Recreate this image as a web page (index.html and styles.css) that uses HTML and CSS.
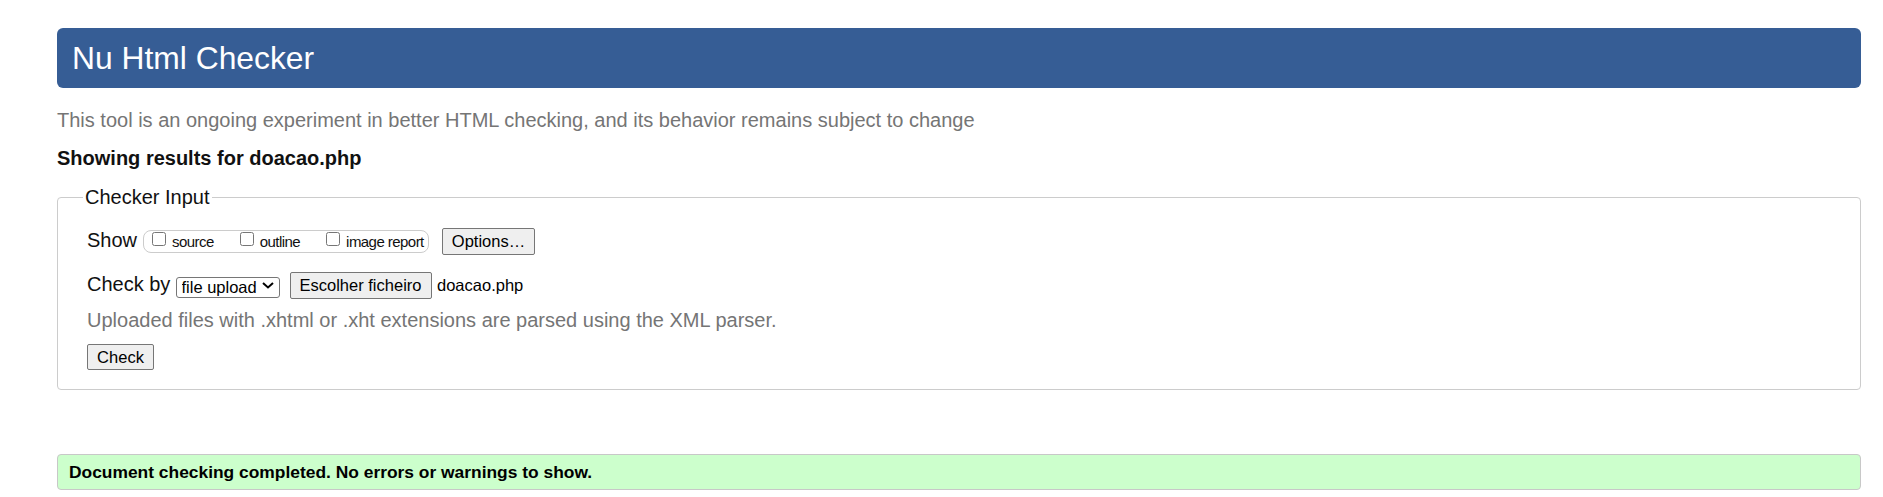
FILE: index.html
```html
<!DOCTYPE html>
<html lang="en">
<head>
<meta charset="utf-8">
<title>Nu Html Checker</title>
<link rel="stylesheet" href="styles.css">
</head>
<body>
<h1 class="title">Nu Html Checker</h1>
<p class="desc">This tool is an ongoing experiment in better HTML checking, and its behavior remains subject to change</p>
<p class="showing">Showing results for doacao.php</p>
<fieldset class="input">
  <legend class="legend">Checker Input</legend>
  <div class="row row-show">
    <span class="row-label label-show">Show</span>
    <div class="show-opts">
      <label class="opt"><input type="checkbox" class="cb">source</label>
      <label class="opt"><input type="checkbox" class="cb">outline</label>
      <label class="opt last"><input type="checkbox" class="cb">image report</label>
    </div>
    <button class="btn btn-options" type="button">Options…</button>
  </div>
  <div class="row row-check">
    <span class="row-label label-check">Check by</span>
    <span class="select-wrap">
      <select class="select"><option>file upload</option></select>
      <svg class="chev" width="12" height="7" viewBox="0 0 12 7"><path d="M1 1 L6 5.5 L11 1" fill="none" stroke="#000" stroke-width="2"/></svg>
    </span>
    <button class="btn btn-file" type="button">Escolher ficheiro</button>
    <span class="filename">doacao.php</span>
  </div>
  <p class="hint">Uploaded files with .xhtml or .xht extensions are parsed using the XML parser.</p>
  <div class="row row-submit">
    <button class="btn btn-check" type="button">Check</button>
  </div>
</fieldset>
<div class="result">Document checking completed. No errors or warnings to show.</div>
</body>
</html>
```
FILE: styles.css
```css
html, body {
  margin: 0;
  background: #fff;
}
body {
  padding: 28px 22px 0 57px;
  font-family: "Liberation Sans", Arial, sans-serif;
  font-size: 20px;
  color: #111;
}
.title {
  margin: 0;
  height: 60px;
  line-height: 60px;
  padding: 0 15px;
  background: #365d95;
  color: #fff;
  font-weight: normal;
  font-size: 31.8px;
  border-radius: 6px;
}
.desc {
  margin: 21px 0 0;
  line-height: 23px;
  color: #757575;
}
.showing {
  margin: 15px 0 0;
  line-height: 23px;
  font-weight: bold;
}
.input {
  margin: 16px 0 0;
  border: 1px solid #cccccc;
  border-radius: 4px;
  padding: 19px 20px 19px 29px;
  min-width: 0;
}
.legend {
  padding: 0 2px;
  margin-left: -4px;
  line-height: 23px;
  font-size: 20px;
  color: #111;
}
.row {
  display: flex;
  align-items: center;
  height: 27px;
}
.row-label {
  line-height: 23px;
  margin-bottom: 3px;
  white-space: nowrap;
}
.label-show {
  width: 56px;
}
.label-check {
  width: 88.5px;
}
.row-check {
  margin-top: 17px;
}
.show-opts {
  box-sizing: border-box;
  display: flex;
  align-items: center;
  width: 286px;
  height: 23px;
  padding: 0 8px;
  border: 1px solid #cccccc;
  border-radius: 8px;
}
.opt {
  display: flex;
  align-items: center;
  font-size: 15px;
  letter-spacing: -0.55px;
  line-height: 18px;
  margin-right: 26px;
  white-space: nowrap;
}
.opt.last {
  margin-right: 0;
}
.cb {
  box-sizing: border-box;
  width: 14px;
  height: 14px;
  margin: 0 6px 5px 0;
}
.btn {
  box-sizing: border-box;
  height: 27px;
  padding: 0;
  font-family: "Liberation Sans", Arial, sans-serif;
  font-size: 16.5px;
  color: #000;
  background: #efefef;
  border: 1px solid #767676;
  border-radius: 2px;
}
.btn-options {
  width: 93px;
  margin-left: 13px;
}
.select-wrap {
  position: relative;
  display: inline-block;
  width: 104px;
  height: 21px;
}
.select {
  box-sizing: border-box;
  appearance: none;
  -webkit-appearance: none;
  width: 104px;
  height: 21px;
  padding: 0 0 0 5px;
  font-family: "Liberation Sans", Arial, sans-serif;
  font-size: 16.5px;
  color: #000;
  background: #fff;
  border: 1px solid #767676;
  border-radius: 3px;
}
.chev {
  position: absolute;
  right: 6px;
  top: 7px;
  pointer-events: none;
}
.btn-file {
  width: 142px;
  margin-left: 10px;
}
.filename {
  margin-left: 5.5px;
  font-size: 16.5px;
  color: #000;
}
.hint {
  margin: 10px 0 0;
  line-height: 23px;
  color: #757575;
}
.row-submit {
  margin-top: 12px;
  height: 26px;
}
.btn-check {
  width: 67px;
  height: 26px;
}
.result {
  margin-top: 64px;
  padding: 8px 11px;
  line-height: 18px;
  font-size: 17.4px;
  font-weight: bold;
  color: #000;
  background: #ccffcc;
  border: 1px solid #c8c8c8;
  border-radius: 4px;
}
```
